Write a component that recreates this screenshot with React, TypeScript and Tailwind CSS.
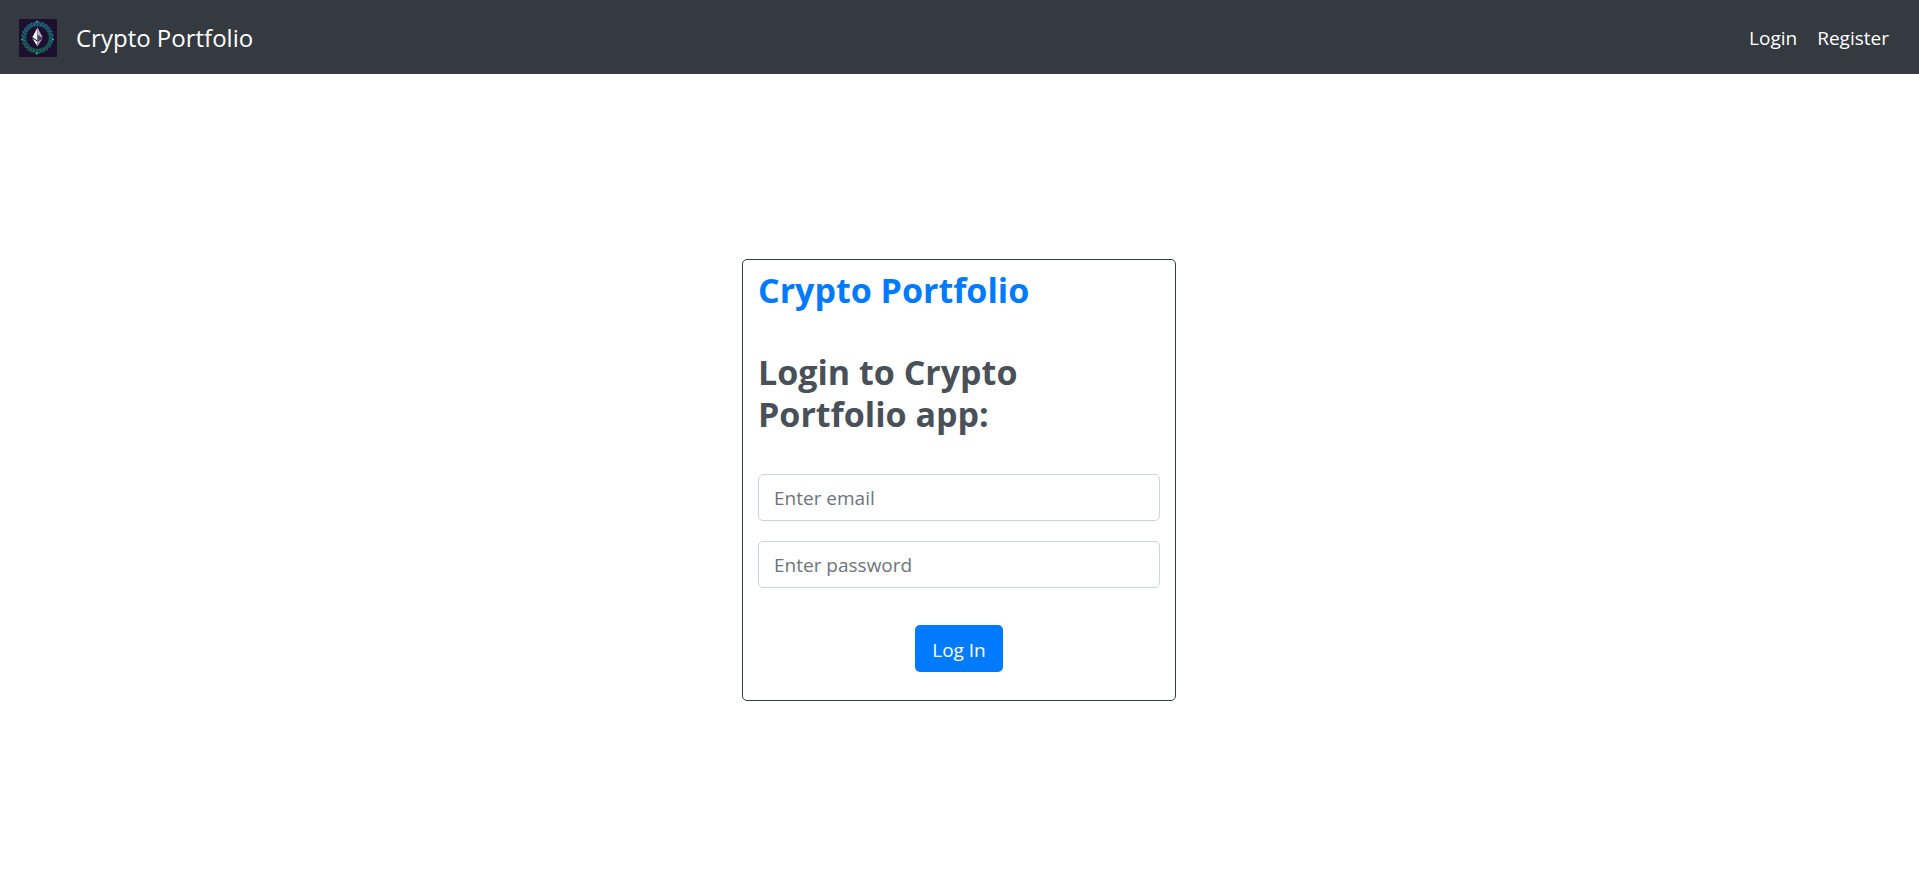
const DOTS = Array.from({ length: 24 }, (_, i) => (i * Math.PI) / 12);
const SMALL_DOTS = Array.from({ length: 24 }, (_, i) => ((i + 0.5) * Math.PI) / 12);

function Logo() {
  return (
    <svg viewBox="0 0 38 38" className="size-[38px] shrink-0" aria-hidden="true">
      <defs>
        <linearGradient id="ring" x1="0" y1="0" x2="0" y2="38" gradientUnits="userSpaceOnUse">
          <stop offset="0" stopColor="#1c8a9c" />
          <stop offset="0.5" stopColor="#14807e" />
          <stop offset="1" stopColor="#1d8a52" />
        </linearGradient>
      </defs>
      <rect width="38" height="38" fill="#1e0f30" />
      <circle cx="18.5" cy="18.5" r="13.5" fill="none" stroke="url(#ring)" strokeWidth="4.4" opacity="0.42" />
      <circle cx="18.5" cy="18.5" r="15" fill="none" stroke="url(#ring)" strokeWidth="0.8" strokeDasharray="2 1.9" />
      <circle cx="18.5" cy="18.5" r="12" fill="none" stroke="url(#ring)" strokeWidth="0.8" strokeDasharray="1.5 1.6" />
      <g fill="url(#ring)">
        {DOTS.map((a, i) => (
          <circle key={i} cx={18.5 + 13.5 * Math.cos(a)} cy={18.5 + 13.5 * Math.sin(a)} r="0.7" />
        ))}
        {SMALL_DOTS.map((a, i) => (
          <circle key={i} cx={18.5 + 15.8 * Math.cos(a)} cy={18.5 + 15.8 * Math.sin(a)} r="0.5" />
        ))}
      </g>
      <g fill="#25b3a0">
        <circle cx="3.2" cy="20.5" r="1" />
        <circle cx="33.8" cy="20.5" r="1" />
        <circle cx="18" cy="2.5" r="1" />
        <circle cx="18" cy="34.5" r="1" />
      </g>
      <path d="M18.5 8.5 L13.4 18.3 L18.5 21.4 Z" fill="#f6f4f7" />
      <path d="M18.5 8.5 L23.6 18.3 L18.5 21.4 Z" fill="#b8b3c0" />
      <path d="M18.5 15.5 L23 18.4 L18.5 21.2 Z" fill="#4b3e5c" />
      <path d="M13.4 19.4 L18.5 22.4 V27.5 Z" fill="#f0edf2" />
      <path d="M23.6 19.4 L18.5 22.4 V27.5 Z" fill="#a09aac" />
    </svg>
  );
}

const field =
  "block h-[47px] w-full rounded-[5px] border border-[#ced4da] bg-white px-[15px] text-[19px] leading-7 text-[#495057] placeholder:text-[#6c757d] placeholder:opacity-100";

export default function App() {
  return (
    <div className="flex min-h-screen flex-col bg-white font-['Open_Sans','Noto_Sans',sans-serif]">
      <nav className="flex h-[74px] items-center justify-between bg-[#343a40] pt-1 pr-[30px] pb-0.5 pl-[19px] text-white">
        <a href="#home" className="flex items-center gap-[19px] text-2xl">
          <Logo />
          Crypto Portfolio
        </a>
        <div className="flex gap-5 text-[19px]">
          <a href="#login">Login</a>
          <a href="#register">Register</a>
        </div>
      </nav>
      <main className="flex flex-1 items-center justify-center pr-px pb-[5px]">
        <form
          className="w-full max-w-[434px] rounded-[5px] border border-[#343a40] px-[15px] pt-[9px] pb-7"
          onSubmit={(e) => e.preventDefault()}
        >
          <h1 className="text-[34px] leading-[42px] font-bold text-[#007bff]">Crypto Portfolio</h1>
          <h2 className="mt-10 text-[34px] leading-[42px] font-bold text-[#495057]">Login to Crypto Portfolio app:</h2>
          <div className="mt-[39px] flex flex-col gap-5">
            <input type="email" aria-label="Email" placeholder="Enter email" className={field} />
            <input type="password" aria-label="Password" placeholder="Enter password" className={field} />
          </div>
          <button
            type="submit"
            className="mx-auto mt-[37px] block h-[47px] min-w-[88px] rounded-[5px] bg-[#007bff] px-4 pt-0.5 text-[19px] leading-7 text-white"
          >
            Log In
          </button>
        </form>
      </main>
    </div>
  );
}
